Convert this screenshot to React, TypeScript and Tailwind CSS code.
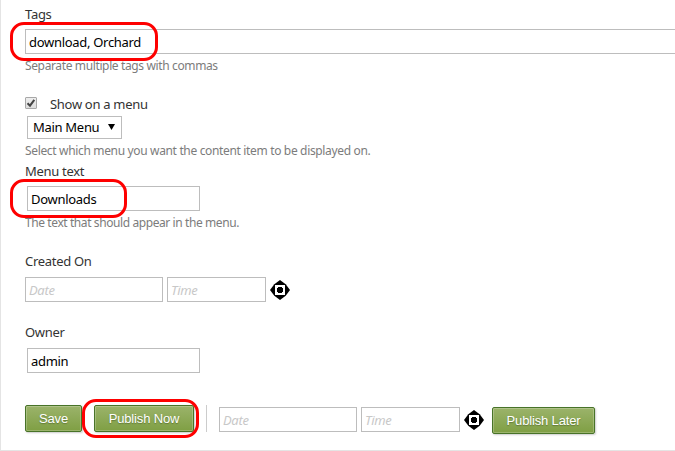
import type { ReactNode } from 'react';

function Label({ children, className = '' }: { children: ReactNode; className?: string }) {
  return <div className={`h-5 text-[13px] leading-5 tracking-[-0.3px] whitespace-nowrap text-[#333] ${className}`}>{children}</div>;
}

function Hint({ children, className = '' }: { children: ReactNode; className?: string }) {
  return <div className={`h-4 text-[12px] leading-4 tracking-[-0.37px] whitespace-nowrap text-[#7c7c7c] ${className}`}>{children}</div>;
}

function Field({ value, placeholder, className = '' }: { value?: string; placeholder?: string; className?: string }) {
  return (
    <input
      type="text"
      defaultValue={value}
      placeholder={placeholder}
      className={`block h-[25px] shrink-0 border border-[#bdbdbd] bg-white px-[3px] pt-px text-[13px] tracking-[-0.3px] text-black outline-none placeholder:text-[#c8c8c8] placeholder:italic ${className}`}
    />
  );
}

function Target() {
  return (
    <svg width="20" height="20" viewBox="0 0 20 20" className="block shrink-0">
      <path d="M10 0 15.7 4.3 20 10 15.7 15.7 10 20 4.3 15.7 0 10 4.3 4.3Z" />
      <path d="M5 5h10v10H5z" fill="#fff" />
      <path d="M8 7h4v1h1v4h-1v1H8v-1H7V8h1z" />
    </svg>
  );
}

function Button({ children, className = '' }: { children: ReactNode; className?: string }) {
  return (
    <button
      className={`h-[27px] shrink-0 rounded-[2px] border border-[#487328] bg-linear-to-b from-[#9bb36a] to-[#7f9f43] font-['Liberation_Sans',Arial,sans-serif] text-[13px] leading-[25px] tracking-[-0.15px] whitespace-nowrap text-white shadow-[inset_0_0_0_1px_rgba(255,255,255,0.22),1px_1px_2px_#ccc] [text-shadow:0_1px_1px_rgba(60,80,30,0.5)] ${className}`}
    >
      {children}
    </button>
  );
}

function Ring({ className }: { className: string }) {
  return <div className={`pointer-events-none absolute h-[39px] rounded-[14px] border-3 border-[#fe0000] ${className}`} />;
}

export default function App() {
  return (
    <div className="relative flex h-[451px] w-[675px] flex-col overflow-hidden border-b border-l border-[#e4e4e4] bg-white pt-[4px] pl-[24px] font-['Noto_Sans','Open_Sans',sans-serif]">
      <Label>Tags</Label>
      <Field value="download, Orchard" className="mt-[5px] w-[660px]" />
      <Hint className="mt-[4px]">Separate multiple tags with commas</Hint>

      <div className="mt-[20px] flex h-5 items-center">
        <span className="mt-[-2px] flex size-[12px] items-center justify-center rounded-[1px] border border-[#a8a8a8] bg-linear-to-b from-[#eeeeee] to-[#dddddd]">
          <svg width="10" height="10" viewBox="0 0 10 10" className="shrink-0">
            <path d="M1.5 5.2 4 7.7 8.3 1.8" fill="none" stroke="#444" strokeWidth="2" />
          </svg>
        </span>
        <Label className="ml-[13px]">Show on a menu</Label>
      </div>
      <div className="mt-[2px] ml-[2px] flex h-[23px] w-[95px] shrink-0 items-center justify-between border border-[#bdbdbd] pr-[6px] pl-[5px] text-[13px] tracking-[-0.3px] text-black">
        <span className="whitespace-nowrap">Main Menu</span>
        <svg width="7" height="6" viewBox="0 0 7 6" className="-mt-[2px]">
          <path d="M0 0h7L3.5 6Z" />
        </svg>
      </div>
      <Hint className="mt-[4px] tracking-[-0.34px]!">Select which menu you want the content item to be displayed on.</Hint>

      <Label className="mt-[2px]">Menu text</Label>
      <Field value="Downloads" className="mt-[5px] ml-[2px] w-[173px]" />
      <Hint className="mt-[4px] tracking-[-0.41px]!">The text that should appear in the menu.</Hint>

      <Label className="mt-[20px]">Created On</Label>
      <div className="mt-[6px] flex items-center gap-[4px]">
        <Field placeholder="Date" className="w-[138px]" />
        <Field placeholder="Time" className="w-[99px]" />
        <Target />
      </div>

      <Label className="mt-[20px]">Owner</Label>
      <Field value="admin" className="mt-[6px] ml-[2px] w-[173px]" />

      <div className="mt-[32px] flex items-start">
        <Button className="w-[57px]">Save</Button>
        <Button className="ml-[12px] w-[100px]">Publish Now</Button>
        <div className="ml-[12px] h-[27px] w-px bg-[#ccc]" />
        <div className="mt-[2px] ml-[12px] flex items-center gap-[4px]">
          <Field placeholder="Date" className="w-[138px]" />
          <Field placeholder="Time" className="w-[99px]" />
          <Target />
        </div>
        <Button className="mt-[2px] ml-[8px] w-[103px]">Publish Later</Button>
      </div>

      <Ring className="top-[22px] left-[9px] w-[148px]" />
      <Ring className="top-[179px] left-[9px] w-[117px]" />
      <Ring className="top-[399px] left-[81px] w-[117px]" />
    </div>
  );
}
